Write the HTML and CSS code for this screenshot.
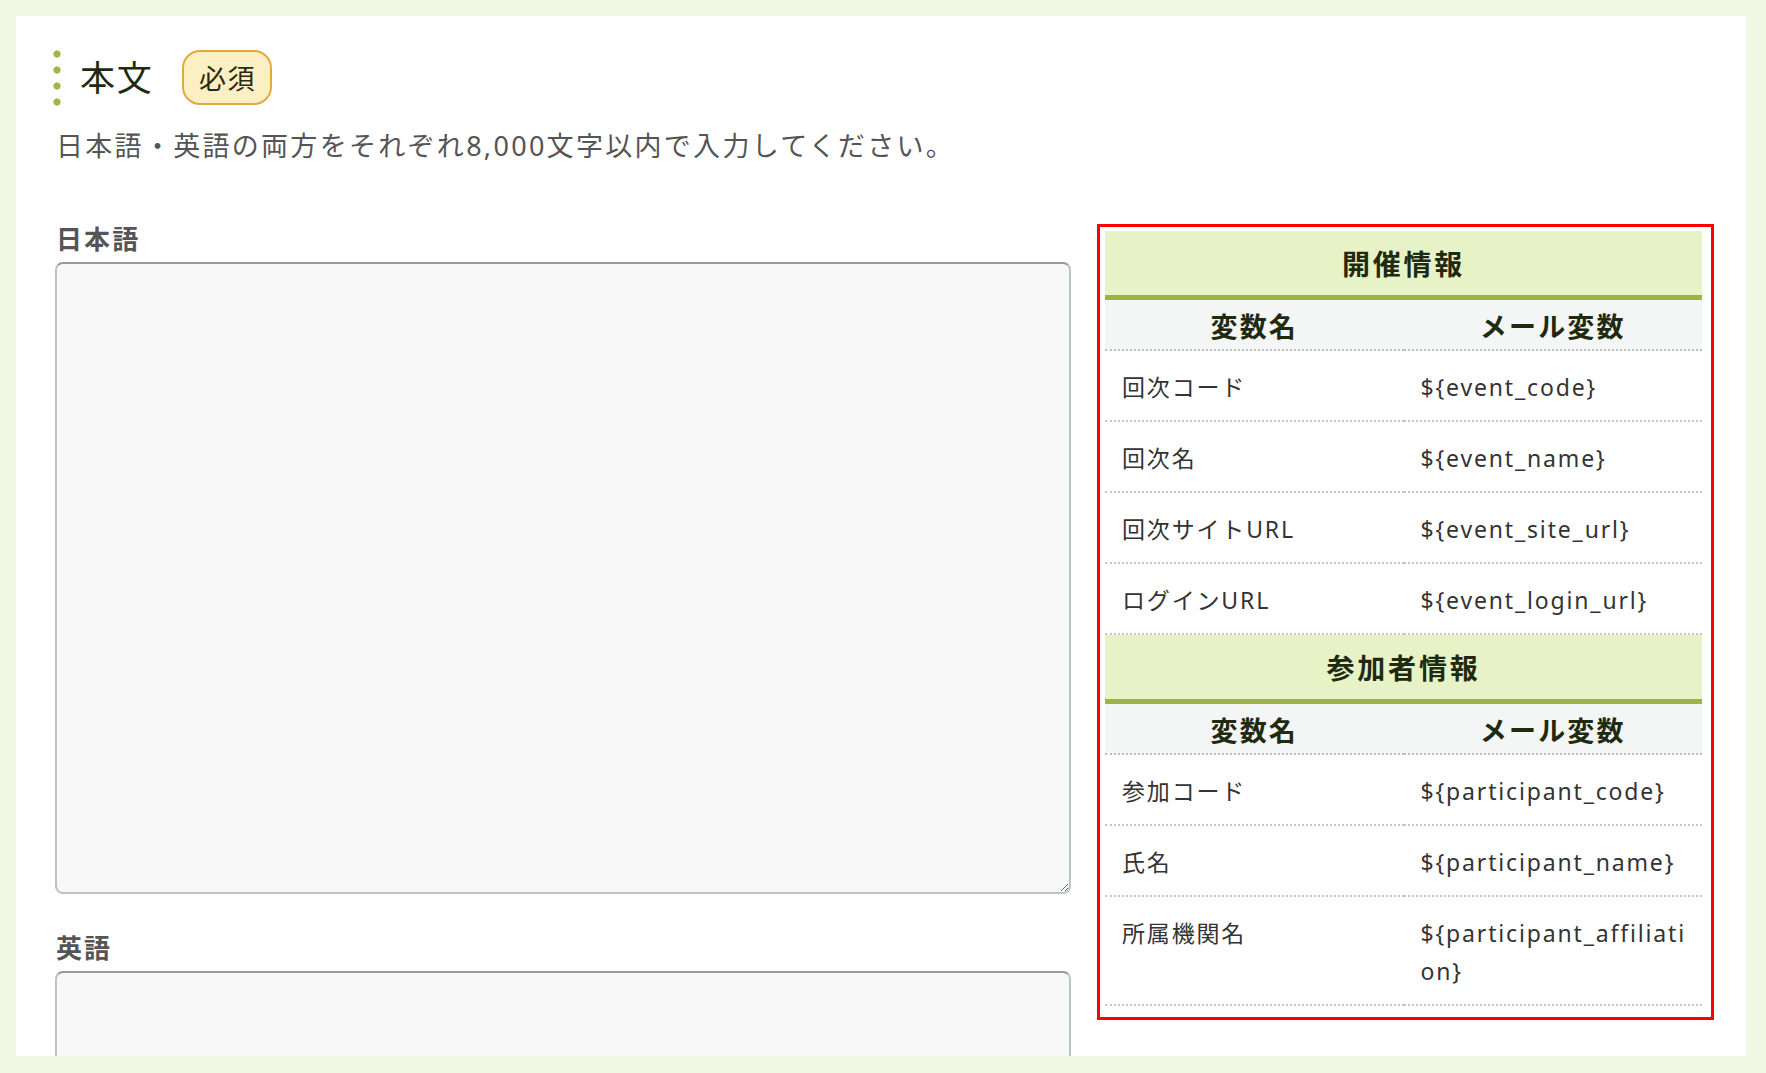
FILE: index.html
```html
<!DOCTYPE html>
<html lang="ja">
<head>
<meta charset="utf-8">
<title>本文</title>
<link rel="stylesheet" href="styles.css">
</head>
<body>
<div class="page">
  <section class="panel">
    <div class="title-row">
      <span class="dots"></span>
      <h2 class="title">本文</h2>
      <span class="badge">必須</span>
    </div>
    <p class="desc">日本語・英語の両方をそれぞれ8,000文字以内で入力してください。</p>
    <div class="columns">
      <div class="fields">
        <div class="field">
          <label class="field-label">日本語</label>
          <textarea class="textarea tall"></textarea>
        </div>
        <div class="field field-next">
          <label class="field-label">英語</label>
          <textarea class="textarea tall"></textarea>
        </div>
      </div>
      <div class="vars">
        <table class="var-table">
          <colgroup><col class="c1"><col class="c2"></colgroup>
          <tbody>
            <tr><th class="group" colspan="2">開催情報</th></tr>
            <tr class="colhead"><th>変数名</th><th>メール変数</th></tr>
            <tr><td>回次コード</td><td class="code">${event_code}</td></tr>
            <tr><td>回次名</td><td class="code">${event_name}</td></tr>
            <tr><td>回次サイトURL</td><td class="code">${event_site_url}</td></tr>
            <tr><td>ログインURL</td><td class="code">${event_login_url}</td></tr>
            <tr><th class="group" colspan="2">参加者情報</th></tr>
            <tr class="colhead"><th>変数名</th><th>メール変数</th></tr>
            <tr><td>参加コード</td><td class="code">${participant_code}</td></tr>
            <tr><td>氏名</td><td class="code">${participant_name}</td></tr>
            <tr><td>所属機関名</td><td class="code">${participant_affiliation}</td></tr>
          </tbody>
        </table>
      </div>
    </div>
  </section>
</div>
</body>
</html>
```
FILE: styles.css
```css
* { box-sizing: border-box; }
html, body {
  margin: 0;
  padding: 0;
  background: #f3f8e5;
  font-family: "Noto Sans", "Noto Sans CJK JP", sans-serif;
  overflow: hidden;
}
.page {
  padding: 16px 20px 0 16px;
  height: 1073px;
}
.panel {
  background: #ffffff;
  height: 1040px;
  overflow: hidden;
  padding: 34px 32px 0 39px;
}
.title-row {
  display: flex;
  align-items: center;
  height: 55px;
}
.dots {
  width: 8px;
  height: 64px;
  margin-left: -2px;
  background-image: radial-gradient(circle, #9cb842 3.3px, transparent 3.9px);
  background-size: 8px 16px;
  background-repeat: repeat-y;
}
.title {
  margin: 0 0 0 19px;
  font-size: 35px;
  font-weight: 400;
  letter-spacing: 0.05em;
  color: #1f2a10;
  line-height: 55px;
}
.badge {
  margin-left: 28px;
  width: 90px;
  height: 55px;
  display: inline-flex;
  align-items: center;
  justify-content: center;
  padding-left: 2px;
  border: 2px solid #e0aa3e;
  border-radius: 18px;
  background: #fdefc4;
  color: #2a2a12;
  font-size: 27px;
  letter-spacing: 0.06em;
}
.desc {
  margin: 21px 0 0 1px;
  font-size: 27px;
  line-height: 39px;
  letter-spacing: 0.085em;
  color: #555555;
}
.columns {
  display: grid;
  grid-template-columns: 1fr 617px;
  column-gap: 26px;
  margin-top: 59px;
  align-items: start;
}
.field {
  display: flex;
  flex-direction: column;
}
.field-next {
  margin-top: 39px;
}
.field-label {
  font-size: 26px;
  line-height: 30px;
  font-weight: 700;
  letter-spacing: 0.08em;
  color: #555555;
  margin: 0 0 8px 1px;
}
.textarea {
  display: block;
  width: 100%;
  height: 632px;
  border: 2px solid #b9c5c2;
  border-top-color: #999999;
  border-radius: 8px;
  background: #f7f8f7;
  resize: vertical;
  font-family: inherit;
}
.vars {
  border: 3px solid #ff0000;
  padding: 4px 9px 11px 5px;
}
.var-table {
  width: 100%;
  border-collapse: separate;
  border-spacing: 0;
  table-layout: fixed;
}
.var-table .c1, .var-table .c2 { width: 50%; }
.var-table th.group {
  height: 69px;
  padding: 0;
  background: #e7f2c6;
  border-bottom: 5px solid #9bb544;
  font-size: 28px;
  letter-spacing: 0.1em;
  font-weight: 700;
  color: #1f2a10;
  text-align: center;
}
.colhead th {
  height: 51px;
  padding: 2px 0 0;
  background: #f4f6f5;
  border-bottom: 2px dotted #bcc0c0;
  font-size: 27px;
  font-weight: 700;
  letter-spacing: 0.08em;
  color: #1f2a10;
  text-align: center;
}
.var-table td {
  padding: 17px 17px 14px;
  font-size: 23px;
  line-height: 38px;
  letter-spacing: 0.08em;
  color: #333333;
  vertical-align: top;
  border-bottom: 2px dotted #c3c7c7;
}
.var-table td.code {
  padding-right: 12px;
  word-break: break-all;
}
```
